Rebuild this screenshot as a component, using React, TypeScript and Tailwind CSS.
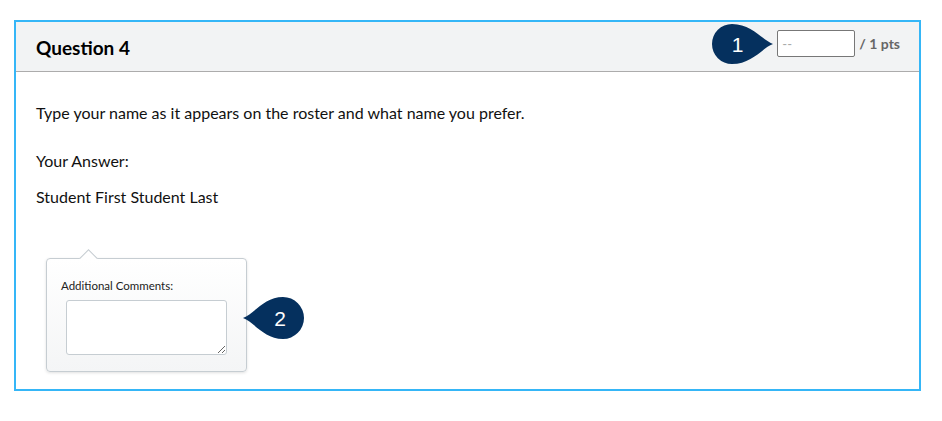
import React from "react";

function BadgeRight({ n }: { n: string }) {
  return (
    <svg width="62" height="40" viewBox="0 0 62 40" className="block">
      <path
        d="M61 20 C 50 16, 40 0, 20 0 A20 20 0 0 0 20 40 C 40 40, 50 24, 61 20 Z"
        fill="#05305e"
      />
      <text
        x="25.5"
        y="27.5"
        textAnchor="middle"
        fill="#ffffff"
        fontSize="21"
        fontFamily="'Liberation Sans', Arial, sans-serif"
      >
        {n}
      </text>
    </svg>
  );
}

function BadgeLeft({ n }: { n: string }) {
  return (
    <svg width="62" height="42" viewBox="0 0 62 42" className="block">
      <path
        d="M1 21 C 12 17, 22 0, 41 0 A21 21 0 0 1 41 42 C 22 42, 12 25, 1 21 Z"
        fill="#05305e"
      />
      <text
        x="38"
        y="28.5"
        textAnchor="middle"
        fill="#ffffff"
        fontSize="21"
        fontFamily="'Liberation Sans', Arial, sans-serif"
      >
        {n}
      </text>
    </svg>
  );
}

export default function App() {
  return (
    <div
      className="w-[942px] h-[421px] bg-white pl-[14px] pt-[20px] text-[#111]"
      style={{ fontFamily: "Lato, 'Noto Sans', sans-serif" }}
    >
      <div className="w-[907px] h-[371px] border-2 border-[#35b6f7] flex flex-col">
        <div className="h-[50px] shrink-0 bg-[#f2f3f4] border-b border-[#acacac] flex items-center justify-between pl-5 pr-[19px]">
          <h3 className="text-[19px] font-bold leading-none text-black mt-[1px]">
            Question 4
          </h3>
          <div className="relative flex items-center gap-[4px] -mt-[6px]">
            <div className="absolute right-full mr-[3px] top-1/2 -translate-y-1/2">
              <BadgeRight n="1" />
            </div>
            <input
              className="w-[78px] h-[27px] border border-[#777777] rounded-[2px] bg-white pl-[4px] text-[13px] placeholder:text-[#aaaaaa] outline-none"
              placeholder="--"
            />
            <span className="text-[14px] font-bold text-[#666666]">/ 1 pts</span>
          </div>
        </div>
        <div className="px-5 pt-[30px] text-[16px] leading-[22px] text-[#111]">
          <p>Type your name as it appears on the roster and what name you prefer.</p>
          <p className="mt-[26px]">Your Answer:</p>
          <p className="mt-[14px]">Student First Student Last</p>
          <div className="relative mt-[50px] ml-[10px] w-[201px] h-[114px] rounded-[4px] border border-[#c6cdd2] bg-gradient-to-b from-white to-[#f4f5f6] shadow-[0_1px_3px_rgba(0,0,0,0.12)] pl-[14px] pr-[20px] pt-[20px]">
            <div className="absolute left-[32px] -top-[10px] w-[19px] h-[10px] overflow-hidden">
              <div className="w-[14px] h-[14px] bg-white border border-[#c6cdd2] rotate-45 translate-x-[2.5px] translate-y-[3px]" />
            </div>
            <div className="text-[11.5px] leading-[14px] text-[#222]">Additional Comments:</div>
            <textarea className="block mt-[7px] ml-[5px] w-[161px] h-[55px] border border-[#c6cdd2] rounded-[3px] bg-white outline-none resize-y" />
            <div className="absolute left-[195px] top-[38px]">
              <BadgeLeft n="2" />
            </div>
          </div>
        </div>
      </div>
    </div>
  );
}
